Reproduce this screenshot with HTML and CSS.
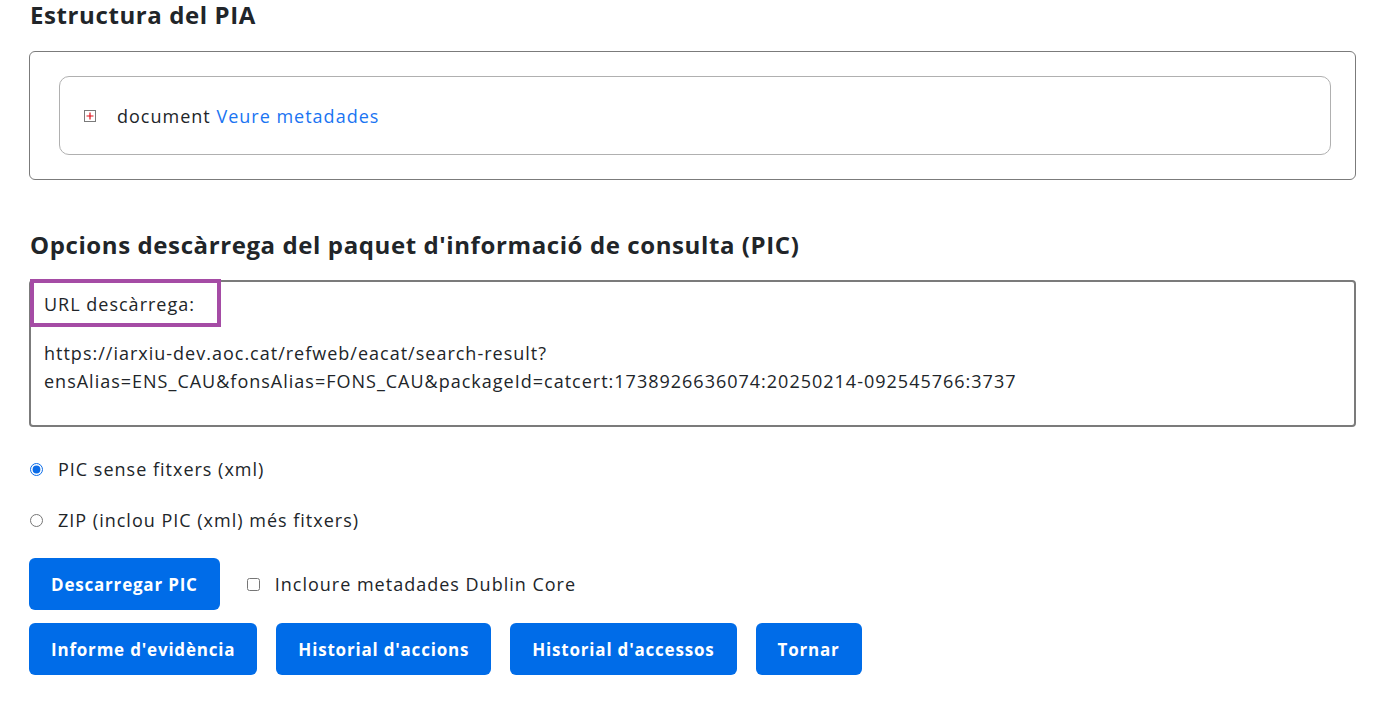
FILE: index.html
```html
<!DOCTYPE html>
<html lang="ca">
<head>
<meta charset="utf-8">
<title>PIA</title>
<link rel="stylesheet" href="styles.css">
</head>
<body>
<main class="page">
  <h2 class="title">Estructura del PIA</h2>
  <div class="outer-box">
    <div class="inner-box">
      <span class="expander" aria-hidden="true"><svg width="12" height="12" viewBox="0 0 12 12"><rect x="0.5" y="0.5" width="11" height="11" fill="#fff" stroke="#7a7a7a"/><path d="M6 2.5v7M2.5 6h7" stroke="#e0101a" stroke-width="1.2"/></svg></span>
      <span class="doc">document <a href="#" class="link">Veure metadades</a></span>
    </div>
  </div>

  <h2 class="title title-2">Opcions descàrrega del paquet d'informació de consulta (PIC)</h2>
  <div class="url-box">
    <span class="url-label">URL descàrrega:</span>
    <p class="url-text">https://iarxiu-dev.aoc.cat/refweb/eacat/search-result?<br>ensAlias=ENS_CAU&amp;fonsAlias=FONS_CAU&amp;packageId=catcert:1738926636074:20250214-092545766:3737</p>
  </div>

  <label class="option option-1"><input type="radio" name="pic" checked> PIC sense fitxers (xml)</label>
  <label class="option option-2"><input type="radio" name="pic"> ZIP (inclou PIC (xml) més fitxers)</label>

  <div class="row row-1">
    <button class="btn">Descarregar PIC</button>
    <label class="check"><input type="checkbox"> Incloure metadades Dublin Core</label>
  </div>
  <div class="row row-2">
    <button class="btn">Informe d'evidència</button>
    <button class="btn">Historial d'accions</button>
    <button class="btn">Historial d'accessos</button>
    <button class="btn">Tornar</button>
  </div>
</main>
</body>
</html>
```

FILE: styles.css
```css
html, body {
  margin: 0;
  padding: 0;
  background: #fff;
}
body {
  font-family: "Open Sans", "Liberation Sans", sans-serif;
  color: #212529;
  font-size: 18px;
  letter-spacing: 1px;
}
.page {
  padding: 0 35px 0 29px;
}
.title {
  margin: 0 0 0 1px;
  font-size: 24px;
  font-weight: 700;
  line-height: 32px;
  letter-spacing: 0.6px;
  color: #212529;
}
.title:first-child {
  line-height: 30px;
}
.title-2 {
  margin-top: 49px;
}
.outer-box {
  margin-top: 21px;
  border: 1px solid #7b7b7b;
  border-radius: 6px;
  padding: 24px 24px 24px 29px;
}
.inner-box {
  border: 1px solid #b0b0b0;
  border-radius: 10px;
  height: 77px;
  display: flex;
  align-items: center;
  padding-left: 24px;
}
.expander {
  display: inline-flex;
  width: 12px;
  height: 12px;
  margin-right: 21px;
}
.doc {
  line-height: 24px;
}
.link {
  color: #1a74f2;
  text-decoration: none;
}
.url-box {
  margin-top: 19px;
  border: 2px solid #7b7b7b;
  border-radius: 4px;
  height: 143px;
}
.url-label {
  display: block;
  width: fit-content;
  margin: -3px 0 0 -1px;
  border: 4px solid #a54ca5;
  padding: 9px 22px 7px 10px;
  line-height: 24px;
}
.url-text {
  margin: 12px 0 0 13px;
  line-height: 28px;
}
.option {
  display: flex;
  align-items: center;
  line-height: 24px;
}
.option input {
  margin: 0 15px 0 1px;
  width: 13px;
  height: 13px;
  accent-color: #0b6ce8;
}
.option-1 {
  margin-top: 30px;
}
.option-2 {
  margin-top: 27px;
}
.row {
  display: flex;
  align-items: center;
  gap: 19px;
}
.row-1 {
  margin-top: 26px;
  gap: 27px;
}
.row-2 {
  margin-top: 13px;
}
.btn {
  font-family: inherit;
  font-size: 17px;
  font-weight: 700;
  color: #fff;
  background: #006ce8;
  border: 0;
  border-radius: 6px;
  height: 52px;
  padding: 0 22px;
  letter-spacing: 0.8px;
}
.check {
  display: flex;
  align-items: center;
}
.check input {
  margin: 0 15px 0 0;
  width: 13px;
  height: 13px;
}
```
